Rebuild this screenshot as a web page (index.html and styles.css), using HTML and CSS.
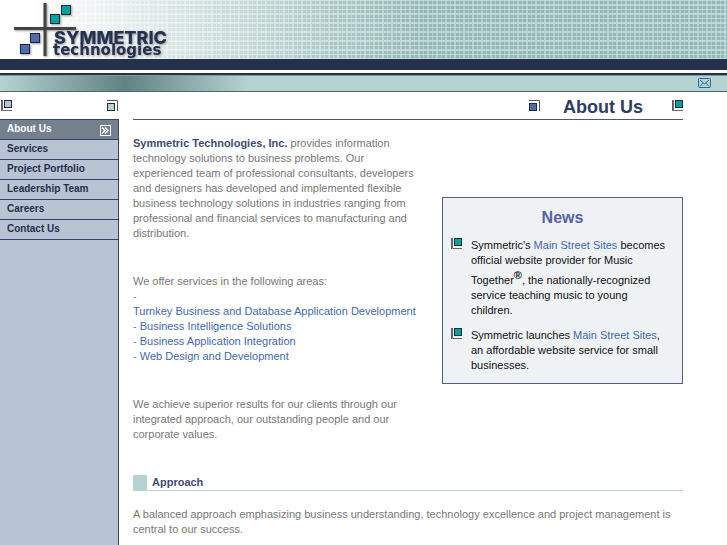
FILE: index.html
```html
<!DOCTYPE html>
<html lang="en">
<head>
    <meta charset="UTF-8">
    <meta name="viewport" content="width=device-width, initial-scale=1.0">
    <title>Symmetric Technologies - About Us</title>
    <link rel="stylesheet" href="styles.css">
</head>
<body>
<!-- Shared corner squares -->
<svg class="symbols" aria-hidden="true">
    <symbol id="corner-left" viewBox="0 0 11 11">
        <path d="M1.5 0V10.5H11M0.5 0V11" fill="none" stroke="#666"/>
        <rect x="3.5" y="0.5" width="7" height="7" fill="currentColor" stroke="#1d2c3c"/>
    </symbol>
    <symbol id="corner-right" viewBox="0 0 11 11">
        <path d="M0 0.5H10.5V11" fill="none" stroke="#555"/>
        <rect x="0.5" y="3.5" width="7" height="7" fill="currentColor" stroke="#1d2c3c"/>
    </symbol>
</svg>

<header>
    <div class="banner">
        <a href="index.html" class="logo" aria-label="Symmetric Technologies">
            <svg width="180" height="59" viewBox="0 0 180 59">
                <g class="logo-mark">
                    <path d="M45 3V56M14 28.5H76" stroke="#444" stroke-width="3"/>
                    <rect x="61.5" y="5.5" width="9" height="9" fill="#00a29a" stroke="#1a2a40"/>
                    <rect x="50.5" y="14.5" width="9" height="9" fill="#00a29a" stroke="#1a2a40"/>
                    <rect x="30.5" y="33.5" width="9" height="9" fill="#526cab" stroke="#1a2040"/>
                    <rect x="20.5" y="44.5" width="9" height="9" fill="#526cab" stroke="#1a2040"/>
                </g>
                <text x="54" y="44" class="logo-name">SYMMETRIC</text>
                <text x="53" y="55" class="logo-sub">technologies</text>
            </svg>
        </a>
    </div>
    <div class="stripe"></div>
    <div class="toolbar">
        <a href="mailto:info@symmetric.example" aria-label="Email us">
            <svg width="13" height="11" viewBox="0 0 13 11" fill="none" stroke="#27699a">
                <rect x="0.5" y="0.5" width="12" height="9" rx="1"/>
                <path d="M2 2L6.5 6L11 2M2 8.5L5 5M11 8.5L8 5"/>
            </svg>
        </a>
    </div>
</header>

<div class="page">
    <aside>
        <div class="nav-top">
            <svg class="corner pale"><use href="#corner-left"/></svg>
            <svg class="corner mint"><use href="#corner-right"/></svg>
        </div>
        <nav>
            <a href="about.html" class="active">About Us
                <svg width="11" height="11" viewBox="0 0 11 11" fill="none" stroke="#fff">
                    <rect x="0.5" y="0.5" width="10" height="10"/>
                    <path d="M2 2.5L5 5.5L2 8.5M5 2.5L8 5.5L5 8.5" stroke-width="1.3"/>
                </svg>
            </a>
            <a href="services.html">Services</a>
            <a href="portfolio.html">Project Portfolio</a>
            <a href="leadership.html">Leadership Team</a>
            <a href="careers.html">Careers</a>
            <a href="contact.html">Contact Us</a>
        </nav>
    </aside>

    <main>
        <div class="title">
            <svg class="corner blue"><use href="#corner-right"/></svg>
            <h1>About Us</h1>
            <svg class="corner teal"><use href="#corner-left"/></svg>
        </div>

        <div class="columns">
            <div class="intro">
                <p><strong>Symmetric Technologies, Inc.</strong> provides information technology solutions to business problems. Our experienced team of professional consultants, developers and designers has developed and implemented flexible business technology solutions in industries ranging from professional and financial services to manufacturing and distribution.</p>
                <p>We offer services in the following areas:<br>
                    -<br>
                    <a href="turnkey.html">Turnkey Business and Database Application Development</a><br>
                    - <a href="intelligence.html">Business Intelligence Solutions</a><br>
                    - <a href="integration.html">Business Application Integration</a><br>
                    - <a href="web.html">Web Design and Development</a></p>
                <p>We achieve superior results for our clients through our integrated approach, our outstanding people and our corporate values.</p>
            </div>

            <section class="news">
                <h2>News</h2>
                <ul>
                    <li>
                        <svg class="corner teal"><use href="#corner-left"/></svg>
                        <span>Symmetric's <a href="mainstreet.html">Main Street Sites</a> becomes official website provider for Music Together<sup>®</sup>, the nationally-recognized service teaching music to young children.</span>
                    </li>
                    <li>
                        <svg class="corner teal"><use href="#corner-left"/></svg>
                        <span>Symmetric launches <a href="mainstreet.html">Main Street Sites</a>, an affordable website service for small businesses.</span>
                    </li>
                </ul>
            </section>
        </div>

        <h3>Approach</h3>
        <p>A balanced approach emphasizing business understanding, technology excellence and project management is central to our success.</p>
    </main>
</div>
</body>
</html>
```
FILE: styles.css
```css
body {
    font-family: "Liberation Sans", Arial, Helvetica, sans-serif;
    font-size: 11px;
    line-height: 15px;
    color: #777;
    background-color: #fff;
    margin: 0;
    min-height: 100vh;
    display: flex;
    flex-direction: column;
}

a {
    color: #3f68ab;
    text-decoration: none;
}

a:hover {
    text-decoration: underline;
}

.symbols {
    position: absolute;
    width: 0;
    height: 0;
}

.corner {
    width: 11px;
    height: 11px;
    flex: none;
}

.pale { color: #b8c3d3; }
.mint { color: #b5d3d1; }
.blue { color: #526cab; }
.teal { color: #00a29a; }

/* Header */
.banner {
    height: 59px;
    background:
        linear-gradient(to right, #fff 30px, rgba(255, 255, 255, 0) 420px),
        repeating-linear-gradient(to right, rgba(200, 225, 223, 0.6) 0 1px, transparent 1px 4px, rgba(200, 225, 223, 0.6) 4px 6px, transparent 6px 9px),
        repeating-linear-gradient(to bottom, #bcd8d6 0 1px, #97b7b5 1px 4px, #bcd8d6 4px 6px, #97b7b5 6px 9px);
}

.logo svg {
    display: block;
}

.logo-mark {
    filter: drop-shadow(1px 1px 1px #999);
}

.logo-name,
.logo-sub {
    fill: #26304f;
    filter: drop-shadow(1px 1px 1px #999);
}

.logo-name {
    font: 800 18px Inter, sans-serif;
}

.logo-sub {
    font: bold 15px "DejaVu Sans", sans-serif;
}

.stripe {
    height: 3px;
    border-top: 11px solid #25304d;
    border-bottom: 2px solid #25304d;
}

.toolbar {
    display: flex;
    justify-content: flex-end;
    align-items: center;
    height: 15px;
    padding-right: 16px;
    border-top: 1px solid #8495a5;
    border-bottom: 1px solid #4e6870;
    background: linear-gradient(to right, #b5d3d1, #5f8482 125px, #b5d3d1 250px);
}

.toolbar svg {
    display: block;
}

/* Layout */
.page {
    flex: 1;
    display: flex;
}

aside {
    flex: none;
    width: 119px;
    display: flex;
    flex-direction: column;
}

.nav-top {
    display: flex;
    justify-content: space-between;
    height: 19px;
    padding: 8px 1px 0;
}

nav {
    flex: 1;
    background-color: #b8c3d3;
    border-top: 1px solid #35436b;
    border-right: 1px solid #35436b;
}

nav a {
    display: flex;
    justify-content: space-between;
    height: 19px;
    padding: 0 7px;
    font-size: 10px;
    line-height: 18px;
    font-weight: bold;
    color: #25304d;
    border-bottom: 1px solid #35436b;
}

nav a.active {
    color: #fff;
    background-color: #75808f;
}

nav a svg {
    margin-top: 5px;
}

main {
    flex: 1;
    margin: 0 44px 0 14px;
}

.title {
    display: flex;
    justify-content: flex-end;
    height: 19px;
    padding-top: 8px;
    border-bottom: 1px solid #4b5870;
}

h1 {
    margin: 0 29px 0 23px;
    font-size: 18px;
    line-height: 14px;
    color: #2f3d60;
}

.columns {
    display: flex;
    justify-content: space-between;
    align-items: flex-start;
    margin-top: 16px;
}

.intro {
    width: 290px;
}

p {
    margin: 0 0 33px;
}

strong {
    color: #3f4c70;
}

/* News box */
.news {
    box-sizing: border-box;
    width: 241px;
    margin-top: 61px;
    padding: 10px 8px;
    border: 1px solid #55607f;
    background-color: #eef2f5;
    color: #111;
}

h2 {
    margin: 0 0 10px;
    font-size: 16px;
    line-height: 20px;
    text-align: center;
    color: #5961a3;
}

ul {
    list-style: none;
    margin: 0;
    padding: 0 8px 0 0;
}

li {
    display: flex;
    gap: 9px;
    margin-bottom: 10px;
}

li:last-child {
    margin-bottom: 0;
}

sup {
    font-size: 11px;
    font-weight: bold;
}

h3 {
    margin: 0 0 16px;
    padding-left: 5px;
    border-left: 14px solid #b5d3d1;
    border-bottom: 1px solid #b5d3d1;
    font-size: 11px;
    line-height: 15px;
    color: #3f4c70;
}
```
